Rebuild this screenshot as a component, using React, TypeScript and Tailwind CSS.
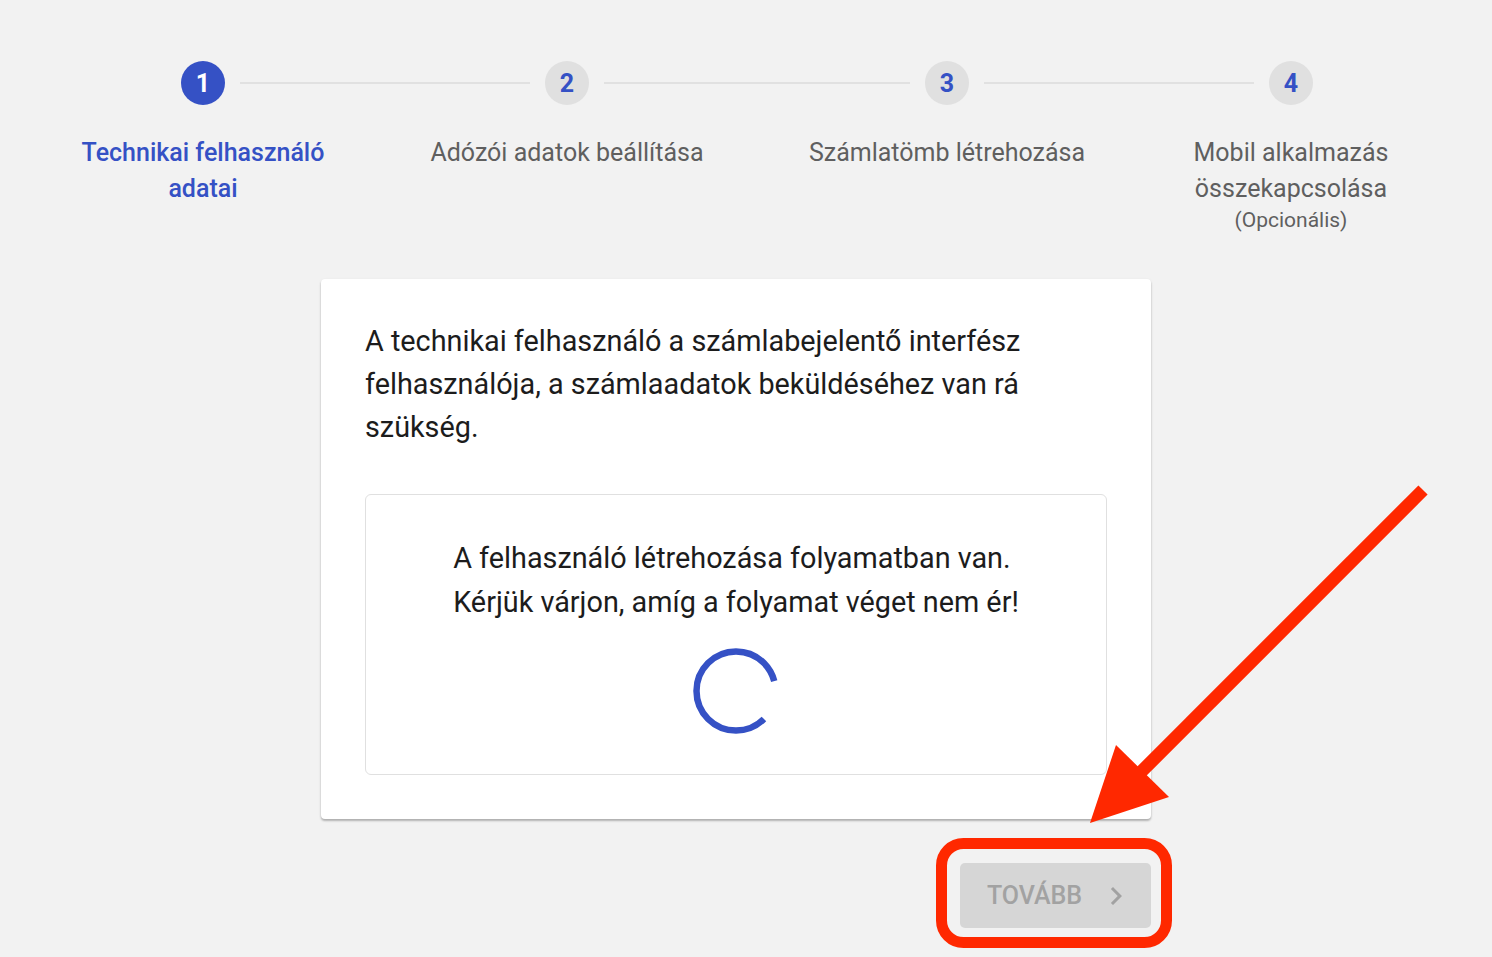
const BLUE = '#3551c5';

type Step = { n: number; lines: string[]; note?: string };

const STEPS: Step[] = [
  { n: 1, lines: ['Technikai felhasználó', 'adatai'] },
  { n: 2, lines: ['Adózói adatok beállítása'] },
  { n: 3, lines: ['Számlatömb létrehozása'] },
  { n: 4, lines: ['Mobil alkalmazás', 'összekapcsolása'], note: '(Opcionális)' },
];

// distance between circle edges, left to right
const GAPS = ['w-[320px]', 'w-[336px]', 'w-[300px]'];

function StepItem({ step, active }: { step: Step; active: boolean }) {
  return (
    <div className="flex flex-none w-11 flex-col items-center">
      <div
        className={
          'flex h-11 w-11 items-center justify-center rounded-full text-[25px] font-bold leading-none ' +
          (active ? 'bg-[#3551c5] text-white' : 'bg-[#e0e0e0] text-[#3551c5]')
        }
      >
        {step.n}
      </div>
      <div
        className={
          'mt-[30px] w-[340px] flex-none text-center text-[25px] leading-[36px] ' +
          (active ? 'font-medium text-[#3551c5]' : 'text-[#5f5f5f]')
        }
      >
        {step.lines.map((l) => (
          <div key={l}>{l}</div>
        ))}
        {step.note && <div className="text-[21px] leading-[26px] text-[#5f5f5f]">{step.note}</div>}
      </div>
    </div>
  );
}

function Spinner() {
  return (
    <svg width="86" height="86" viewBox="0 0 86 86">
      <circle
        cx="43"
        cy="43"
        r="39.5"
        fill="none"
        stroke={BLUE}
        strokeWidth="6.5"
        strokeDasharray="206.8 41.4"
        transform="rotate(45 43 43)"
      />
    </svg>
  );
}

export default function App() {
  return (
    <div
      className="relative h-[957px] w-full overflow-hidden bg-[#f2f2f2]"
      style={{ fontFamily: 'Roboto, "Noto Sans", Arial, sans-serif' }}
    >
      {/* Stepper */}
      <div className="ml-[181px] flex items-start pt-[61px]">
        {STEPS.map((s, i) => (
          <div key={s.n} className="flex items-start">
            <StepItem step={s} active={i === 0} />
            {i < STEPS.length - 1 && (
              <div className={'flex-none px-[15px] pt-[21px] ' + GAPS[i]}>
                <div className="h-[2px] bg-[#e1e1e1]" />
              </div>
            )}
          </div>
        ))}
      </div>

      {/* Card + button */}
      <div className="ml-[321px] mt-[46px] flex w-[830px] flex-col">
        <div className="rounded-[4px] bg-white px-[44px] pb-[44px] pt-[41px] shadow-[0_1px_3px_rgba(0,0,0,0.10),0_2px_2px_rgba(0,0,0,0.22)]">
          <p className="text-[28.8px] leading-[43px] text-[#1c1c1c]">
            A technikai felhasználó a számlabejelentő interfész felhasználója, a számlaadatok beküldéséhez van rá
            szükség.
          </p>
          <div className="mt-[45px] flex flex-col items-center rounded-[6px] border border-[#e0e0e0] pb-[40px] pt-[41px]">
            <div className="w-fit text-[28.8px] leading-[44px] text-[#1c1c1c]">
              <div>A felhasználó létrehozása folyamatban van.</div>
              <div>Kérjük várjon, amíg a folyamat véget nem ér!</div>
            </div>
            <div className="mt-[24px]">
              <Spinner />
            </div>
          </div>
        </div>

        <button
          disabled
          className="mt-[44px] flex h-[65px] w-[191px] items-center justify-center gap-[16px] self-end rounded-[5px] bg-[#d6d6d6] pl-[10px] text-[25px] font-medium text-[#a2a2a2]"
        >
          <span>TOVÁBB</span>
          <svg width="36" height="36" viewBox="0 0 24 24" fill="currentColor">
            <path d="M10 6 8.59 7.41 13.17 12l-4.58 4.59L10 18l6-6z" />
          </svg>
        </button>
      </div>

      {/* Red annotation overlay */}
      <svg
        className="pointer-events-none absolute left-0 top-0"
        width="1492"
        height="957"
        viewBox="0 0 1492 957"
      >
        <rect x="941.5" y="843.5" width="225" height="99" rx="22" fill="none" stroke="#ff2800" strokeWidth="11" />
        <line x1="1423" y1="490" x2="1130" y2="783" stroke="#ff2800" strokeWidth="13" />
        <polygon points="1090,823 1116,745 1169,797" fill="#ff2800" />
      </svg>
    </div>
  );
}
